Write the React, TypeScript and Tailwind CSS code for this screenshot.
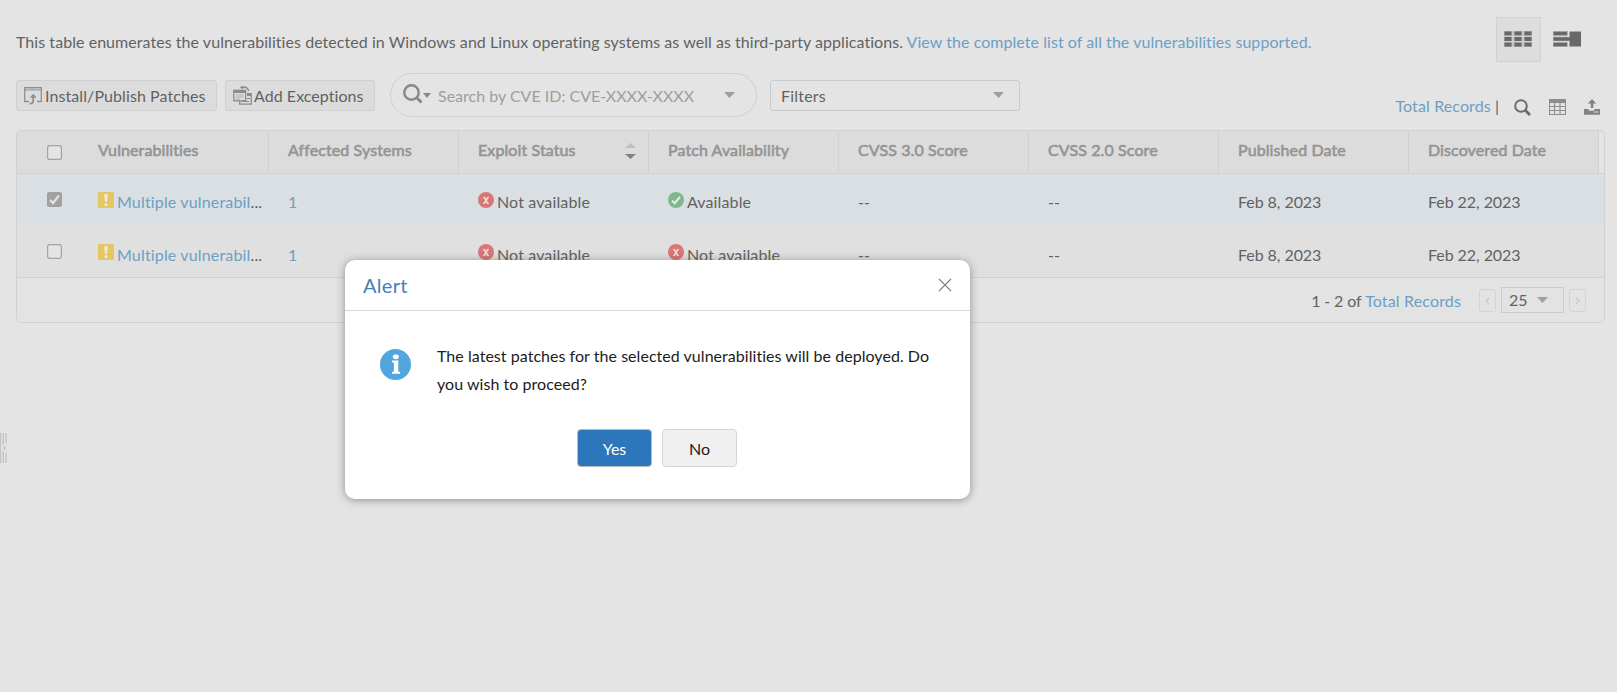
import React from "react";

const columns = [
  "Affected Systems",
  "Exploit Status",
  "Patch Availability",
  "CVSS 3.0 Score",
  "CVSS 2.0 Score",
  "Published Date",
  "Discovered Date",
];

const rows = [
  { checked: true, patch: true },
  { checked: false, patch: false },
];

function Caret({ className = "" }: { className?: string }) {
  return (
    <svg className={className} viewBox="0 0 10 6" preserveAspectRatio="none">
      <path d="M0 0h10L5 6z" fill="currentColor" />
    </svg>
  );
}

function Checkbox({ checked }: { checked?: boolean }) {
  return (
    <svg className="h-[15px] w-[15px] shrink-0" viewBox="0 0 15 15">
      {checked ? (
        <>
          <rect width="15" height="15" rx="2" fill="#a1a1a1" />
          <path d="M3 8l3 3 6-7.5" fill="none" stroke="#e3e3e3" strokeWidth="2.2" />
        </>
      ) : (
        <rect x="0.6" y="0.6" width="13.8" height="13.8" rx="2.2" fill="#e4e4e4" stroke="#a3a3a3" strokeWidth="1.2" />
      )}
    </svg>
  );
}

function Status({ ok }: { ok: boolean }) {
  return (
    <>
      <svg className="mt-[18px] mr-[3px] h-4 w-4 shrink-0" viewBox="0 0 16 16">
        <circle cx="8" cy="8" r="8" fill={ok ? "#80b88c" : "#d97777"} />
        {ok ? (
          <path d="M4 8.6l2.7 2.6L12 4.8" fill="none" stroke="#e6eee8" strokeWidth="2" />
        ) : (
          <g fill="none" stroke="#f0dede">
            <path d="M6 5.3l4 6.4M10 5.3l-4 6.4" strokeWidth="1.6" />
            <path d="M5 5.4h2.4M8.8 5.4h2.2M5 11.5h2.2M8.8 11.5h2.2" strokeWidth="0.8" />
          </g>
        )}
      </svg>
      <span className="tracking-[0.13px]">{ok ? "Available" : "Not available"}</span>
    </>
  );
}

function Warning() {
  return (
    <svg className="mt-[18px] mr-[3px] h-4 w-4 shrink-0" viewBox="0 0 16 16">
      <rect width="16" height="16" rx="0.7" fill="#e6c766" />
      <path d="M6.1 2.6q1.9-1.2 3.8 0L9 10H7z" fill="#ece9df" />
      <circle cx="8" cy="12.6" r="1.6" fill="#ece9df" />
    </svg>
  );
}

function InstallIcon() {
  return (
    <svg className="h-[18px] w-[18px] shrink-0" viewBox="0 0 18 18" fill="none" stroke="#8f8f8f">
      <path d="M5 14.5H.7V.7h16.6v13.8H13" strokeWidth="1.3" />
      <path d="M1 2.9h16" />
      <path d="M2.5 1.6h10M14 1.6h2" strokeWidth=".8" stroke="#b5b5b5" />
      <path d="M9.2 8v6q0 2.4-3.7 2.8" strokeWidth="1.8" />
      <path d="M5.7 10.8L9.2 6.8l3.5 4z" fill="#8f8f8f" stroke="none" />
    </svg>
  );
}

function ExceptionIcon() {
  return (
    <svg className="h-[19px] w-[19px] shrink-0" viewBox="0 0 19 19" fill="none" stroke="#8a8a8a">
      <rect x=".8" y="4.3" width="11.8" height="10.5" strokeWidth="1.3" />
      <path d="M1 6h11" strokeWidth="2" />
      <path d="M3 9h7.5M3 11h7.5M3 13h4" stroke="#b0b0b0" />
      <path d="M14 7.7h4.2v10.5H6.7v-3" strokeWidth="1.3" />
      <path d="M14 9h4" strokeWidth="2" />
      <path d="M9 15.5h7M13.5 12.5H17" />
      <path d="M8 1.3q6-1.3 7.8 3.6" strokeWidth="1.3" />
      <path d="M10 0L6.6 1.6 10 3.3z" fill="#8a8a8a" stroke="none" />
    </svg>
  );
}

function ViewToggles() {
  const ys = [0.5, 6, 11.5];
  return (
    <div className="flex">
      <div className="flex h-[45px] w-[45px] justify-center border border-[#d2d2d2] bg-[#dddddd] pt-[13px] pr-px">
        <svg className="h-4 w-7" viewBox="0 0 28 16">
          <rect width="28" height="16" fill="#b4b4b4" />
          {ys.map((y) =>
            [0, 10, 20].map((x) => <rect key={`${x}-${y}`} x={x + 0.5} y={y} width="7" height="4" fill="#696969" />)
          )}
          <path d="M9 0v16M19 0v16M0 5.2h28M0 10.7h28" stroke="#dddddd" strokeWidth=".9" />
        </svg>
      </div>
      <svg className="mt-[14px] ml-3 h-4 w-7" viewBox="0 0 28 16">
        <rect width="15" height="16" fill="#b4b4b4" />
        <path d="M0 5.2h15M0 10.7h15" stroke="#e3e3e3" strokeWidth=".9" />
        <path d="M.5.7h13.5v3.6H.5zM.5 6.2H17v3.5H.5zM.5 11.7h13.5v3.6H.5zM16.5.5H28v15H16.5z" fill="#696969" />
      </svg>
    </div>
  );
}

function ToolIcons() {
  return (
    <div className="flex pt-[7px]">
      <svg className="h-[17px] w-[17px]" viewBox="0 0 17 17" fill="none" stroke="#6b6b6b">
        <circle cx="7" cy="7" r="5.8" strokeWidth="2" />
        <path d="M11 11l5 5" strokeWidth="2.8" />
      </svg>
      <svg className="ml-[18px] h-4 w-[17px]" viewBox="0 0 17 16" fill="none" stroke="#8d8d8d">
        <rect x=".5" y=".5" width="16" height="15" />
        <path d="M0 2h17" strokeWidth="4" />
        <path d="M0 7.5h17M0 11.5h17M5.5 3v13M11 3v13" strokeWidth="1.1" />
      </svg>
      <svg className="ml-[18px] h-4 w-4" viewBox="0 0 16 16" fill="#828282">
        <path d="M8 0l4.2 4.5H9.3V9H6.7V4.5H3.8z" />
        <path d="M0 10h4l1.6 1.8h4L11 10h5v5.8H0z" />
        <path d="M10 12.3h1.5v1.5H10zM12.4 12.3h2v1.5h-2z" fill="#d0d0d0" />
      </svg>
    </div>
  );
}

function VulnerabilityTable() {
  return (
    <div className="ml-4 mt-[13px] h-[193px] w-[1589px] overflow-hidden rounded-[5px] border border-[#d0d1d2]">
      <div className="flex h-[43px] border-b border-[#d0d1d2] text-[#949494]">
        <div className="flex w-[252px] shrink-0 border-r border-[#d0d1d2] bg-[#dcdcdc]">
          <div className="w-[81px] pt-[14px] pl-[30px]">
            <Checkbox />
          </div>
          <span className="pt-[7px] tracking-[0.1px] [-webkit-text-stroke:0.6px_#949494]">Vulnerabilities</span>
        </div>
        {columns.map((c) => (
          <div key={c} className="flex w-[190px] shrink-0 justify-between border-r border-[#d0d1d2] bg-[#dcdcdc] pl-[19px]">
            <span className="pt-[7px] tracking-[0.1px] [-webkit-text-stroke:0.6px_#949494]">{c}</span>
            {c === "Exploit Status" && (
              <svg className="mt-3 mr-3 h-4 w-[11px]" viewBox="0 0 11 16">
                <path d="M0 5h11L5.5 0z" fill="#bfbfbf" />
                <path d="M0 11h11l-5.5 5z" fill="#828282" />
              </svg>
            )}
          </div>
        ))}
      </div>
      {rows.map((r, i) => (
        <div
          key={i}
          className={
            r.checked
              ? "flex h-[52px] bg-[#dadfe3] leading-[24px] *:h-[52px]"
              : "flex h-[52px] border-b border-[#d0d1d2] bg-[#e0e0e0] leading-[26px] *:h-[51px]"
          }
        >
          <div className="w-[81px] shrink-0 pt-[18px] pl-[30px]">
            <Checkbox checked={r.checked} />
          </div>
          <div className="flex w-[170px] shrink-0 [&>span]:pt-4">
            <Warning />
            <span className="tracking-[0.16px] whitespace-nowrap text-[#6c9fc4]">
              Multiple vulnerabil<span className="text-[#5c5c5c]">...</span>
            </span>
          </div>
          <div className="w-[190px] shrink-0 pt-4 pl-5 text-[#6c9fc4]">1</div>
          <div className="flex w-[190px] shrink-0 pl-5 [&>span]:pt-4">
            <Status ok={false} />
          </div>
          <div className="flex w-[190px] shrink-0 pl-5 [&>span]:pt-4">
            <Status ok={r.patch} />
          </div>
          <div className="w-[190px] shrink-0 pt-4 pl-5">--</div>
          <div className="w-[190px] shrink-0 pt-4 pl-5">--</div>
          <div className="w-[190px] shrink-0 pt-4 pl-5 tracking-[-0.004em]">Feb 8, 2023</div>
          <div className="w-[190px] shrink-0 pt-4 pl-5 tracking-[-0.004em]">Feb 22, 2023</div>
        </div>
      ))}
      <div className="flex h-[44px] justify-end bg-[#e3e3e3] pr-[18px]">
        <div className="mr-[18px] pt-[11px]">
          <span className="tracking-[-0.12px]">1 - 2 of </span>
          <span className="tracking-[0.15px] text-[#6c9fc4]">Total Records</span>
        </div>
        <Pager d="M5 1L2 4l3 3" />
        <div className="mx-[5px] mt-[9px] flex h-[26px] w-[63px] items-center border border-[#cbcbcb] pl-[7px]">
          <span>25</span>
          <Caret className="ml-[9px] h-[6px] w-[11px] text-[#a0a0a0]" />
        </div>
        <Pager d="M2 1l3 3-3 3" />
      </div>
    </div>
  );
}

function Pager({ d }: { d: string }) {
  return (
    <div className="mt-[11px] flex h-[23px] w-[17px] items-center justify-center rounded-[3px] border border-[#d3d3d3]">
      <svg className="h-2 w-[7px]" viewBox="0 0 7 8">
        <path d={d} fill="none" stroke="#c6c6c6" strokeWidth="1.2" />
      </svg>
    </div>
  );
}

function AlertDialog() {
  return (
    <div className="absolute top-[260px] left-[345px] h-[239px] w-[625px] rounded-[10px] bg-white text-[#1c1c1c] shadow-[0_1px_8px_rgba(60,60,40,0.5)]">
      <div className="flex h-[51px] justify-between border-b border-[#d8d8d8] pl-[18px]">
        <h2 className="pt-[10px] text-xl leading-[30px] tracking-[0.015em] text-[#4480b8]">Alert</h2>
        <svg className="mt-[18px] mr-[18px] h-[14px] w-[14px]" viewBox="0 0 14 14">
          <path d="M.9.9l12.2 12.2M13.1.9L.9 13.1" stroke="#7d7d7d" strokeWidth="1.3" />
        </svg>
      </div>
      <div className="flex h-[118px] pt-[31px] pl-[35px]">
        <svg className="mt-[7px] h-[31px] w-[31px] shrink-0" viewBox="0 0 31 31">
          <circle cx="15.5" cy="15.5" r="15.5" fill="#52a5de" />
          <ellipse cx="15.8" cy="7.8" rx="3" ry="2.4" fill="#fff" />
          <path d="M12 11.6h6.3v11.2h1.8v2H12v-2h1.9v-9.2H12z" fill="#fff" />
        </svg>
        <p className="ml-[26px] w-[510px] leading-[28px] tracking-[0.04px]">
          The latest patches for the selected vulnerabilities will be deployed. Do you wish to proceed?
        </p>
      </div>
      <div className="flex gap-[10px] pl-[232px]">
        <button className="h-[38px] w-[75px] rounded-[4px] border border-[#b9b9b9] bg-[#2c77bb] pt-[2px] text-white">Yes</button>
        <button className="h-[38px] w-[75px] rounded-[4px] border border-[#d5d5d5] bg-[#f0f0f0] pt-[2px]">No</button>
      </div>
    </div>
  );
}

export default function App() {
  return (
    <div className="relative h-[692px] w-[1617px] overflow-hidden bg-[#e4e4e4] font-['Lato',sans-serif] text-base text-[#626262] [font-variant-ligatures:none]">
      <header className="flex h-[73px] justify-between pt-[17px] pl-4 pr-[36px]">
        <p className="pt-[13px] tracking-[0.052px] whitespace-nowrap">
          This table enumerates the vulnerabilities detected in Windows and Linux operating systems as well as third-party applications.{" "}
          <span className="text-[#6c9fc4]">View the complete list of all the vulnerabilities supported.</span>
        </p>
        <ViewToggles />
      </header>
      <div className="flex h-[44px] pl-4">
        <div className="mt-[7px] flex h-[31px] w-[201px] shrink-0 items-center rounded-[3px] border border-[#cfcfcf] bg-[#dcdcdc] pl-[7px]">
          <InstallIcon />
          <span className="ml-[3px] tracking-[0.09px] whitespace-nowrap">Install/Publish Patches</span>
        </div>
        <div className="mt-[7px] ml-2 flex h-[31px] w-[150px] shrink-0 items-center rounded-[3px] border border-[#cfcfcf] bg-[#dcdcdc] pl-[7px]">
          <ExceptionIcon />
          <span className="ml-[2px] tracking-[0.05px] whitespace-nowrap">Add Exceptions</span>
        </div>
        <div className="ml-[15px] flex h-[44px] w-[367px] shrink-0 items-center rounded-full border border-[#cfcfcf] text-[#9e9e9e]">
          <svg className="ml-3 mb-[3px] h-5 w-5 shrink-0" viewBox="0 0 20 20" fill="none" stroke="#898989">
            <circle cx="8.5" cy="8.5" r="7.2" strokeWidth="2.5" />
            <path d="M13.5 13.5l5 5" strokeWidth="3" />
          </svg>
          <Caret className="h-[5px] w-2 shrink-0 text-[#898989]" />
          <span className="ml-[7px] w-[286px] pt-[2px]">Search by CVE ID: CVE-XXXX-XXXX</span>
          <Caret className="h-[6px] w-[11px] shrink-0" />
        </div>
        <div className="mt-[7px] ml-[13px] flex h-[31px] w-[250px] shrink-0 items-center justify-between rounded-[3px] border border-[#cbcbcb] pr-[15px] pl-[10px]">
          <span className="tracking-[0.2px]">Filters</span>
          <Caret className="mb-px h-[6px] w-[11px] text-[#9e9e9e]" />
        </div>
        <div className="ml-auto flex pt-[19px] pr-[17px]">
          <div className="mr-[15px] pt-[2px] whitespace-nowrap">
            <span className="tracking-[0.12px] text-[#6c9fc4]">Total Records</span> |
          </div>
          <ToolIcons />
        </div>
      </div>
      <VulnerabilityTable />
      <svg className="absolute top-[433px] left-0 h-[30px] w-[7px]" viewBox="0 0 7 30">
        <path d="M.5 0v30M3.3 0v30M6 0v30" stroke="#c2c2c2" strokeWidth="1.4" />
        <path d="M6 10.5L1.5 15 6 19.5z" fill="#cacaca" stroke="#e8e8e8" strokeWidth="1.2" />
      </svg>
      <AlertDialog />
    </div>
  );
}
